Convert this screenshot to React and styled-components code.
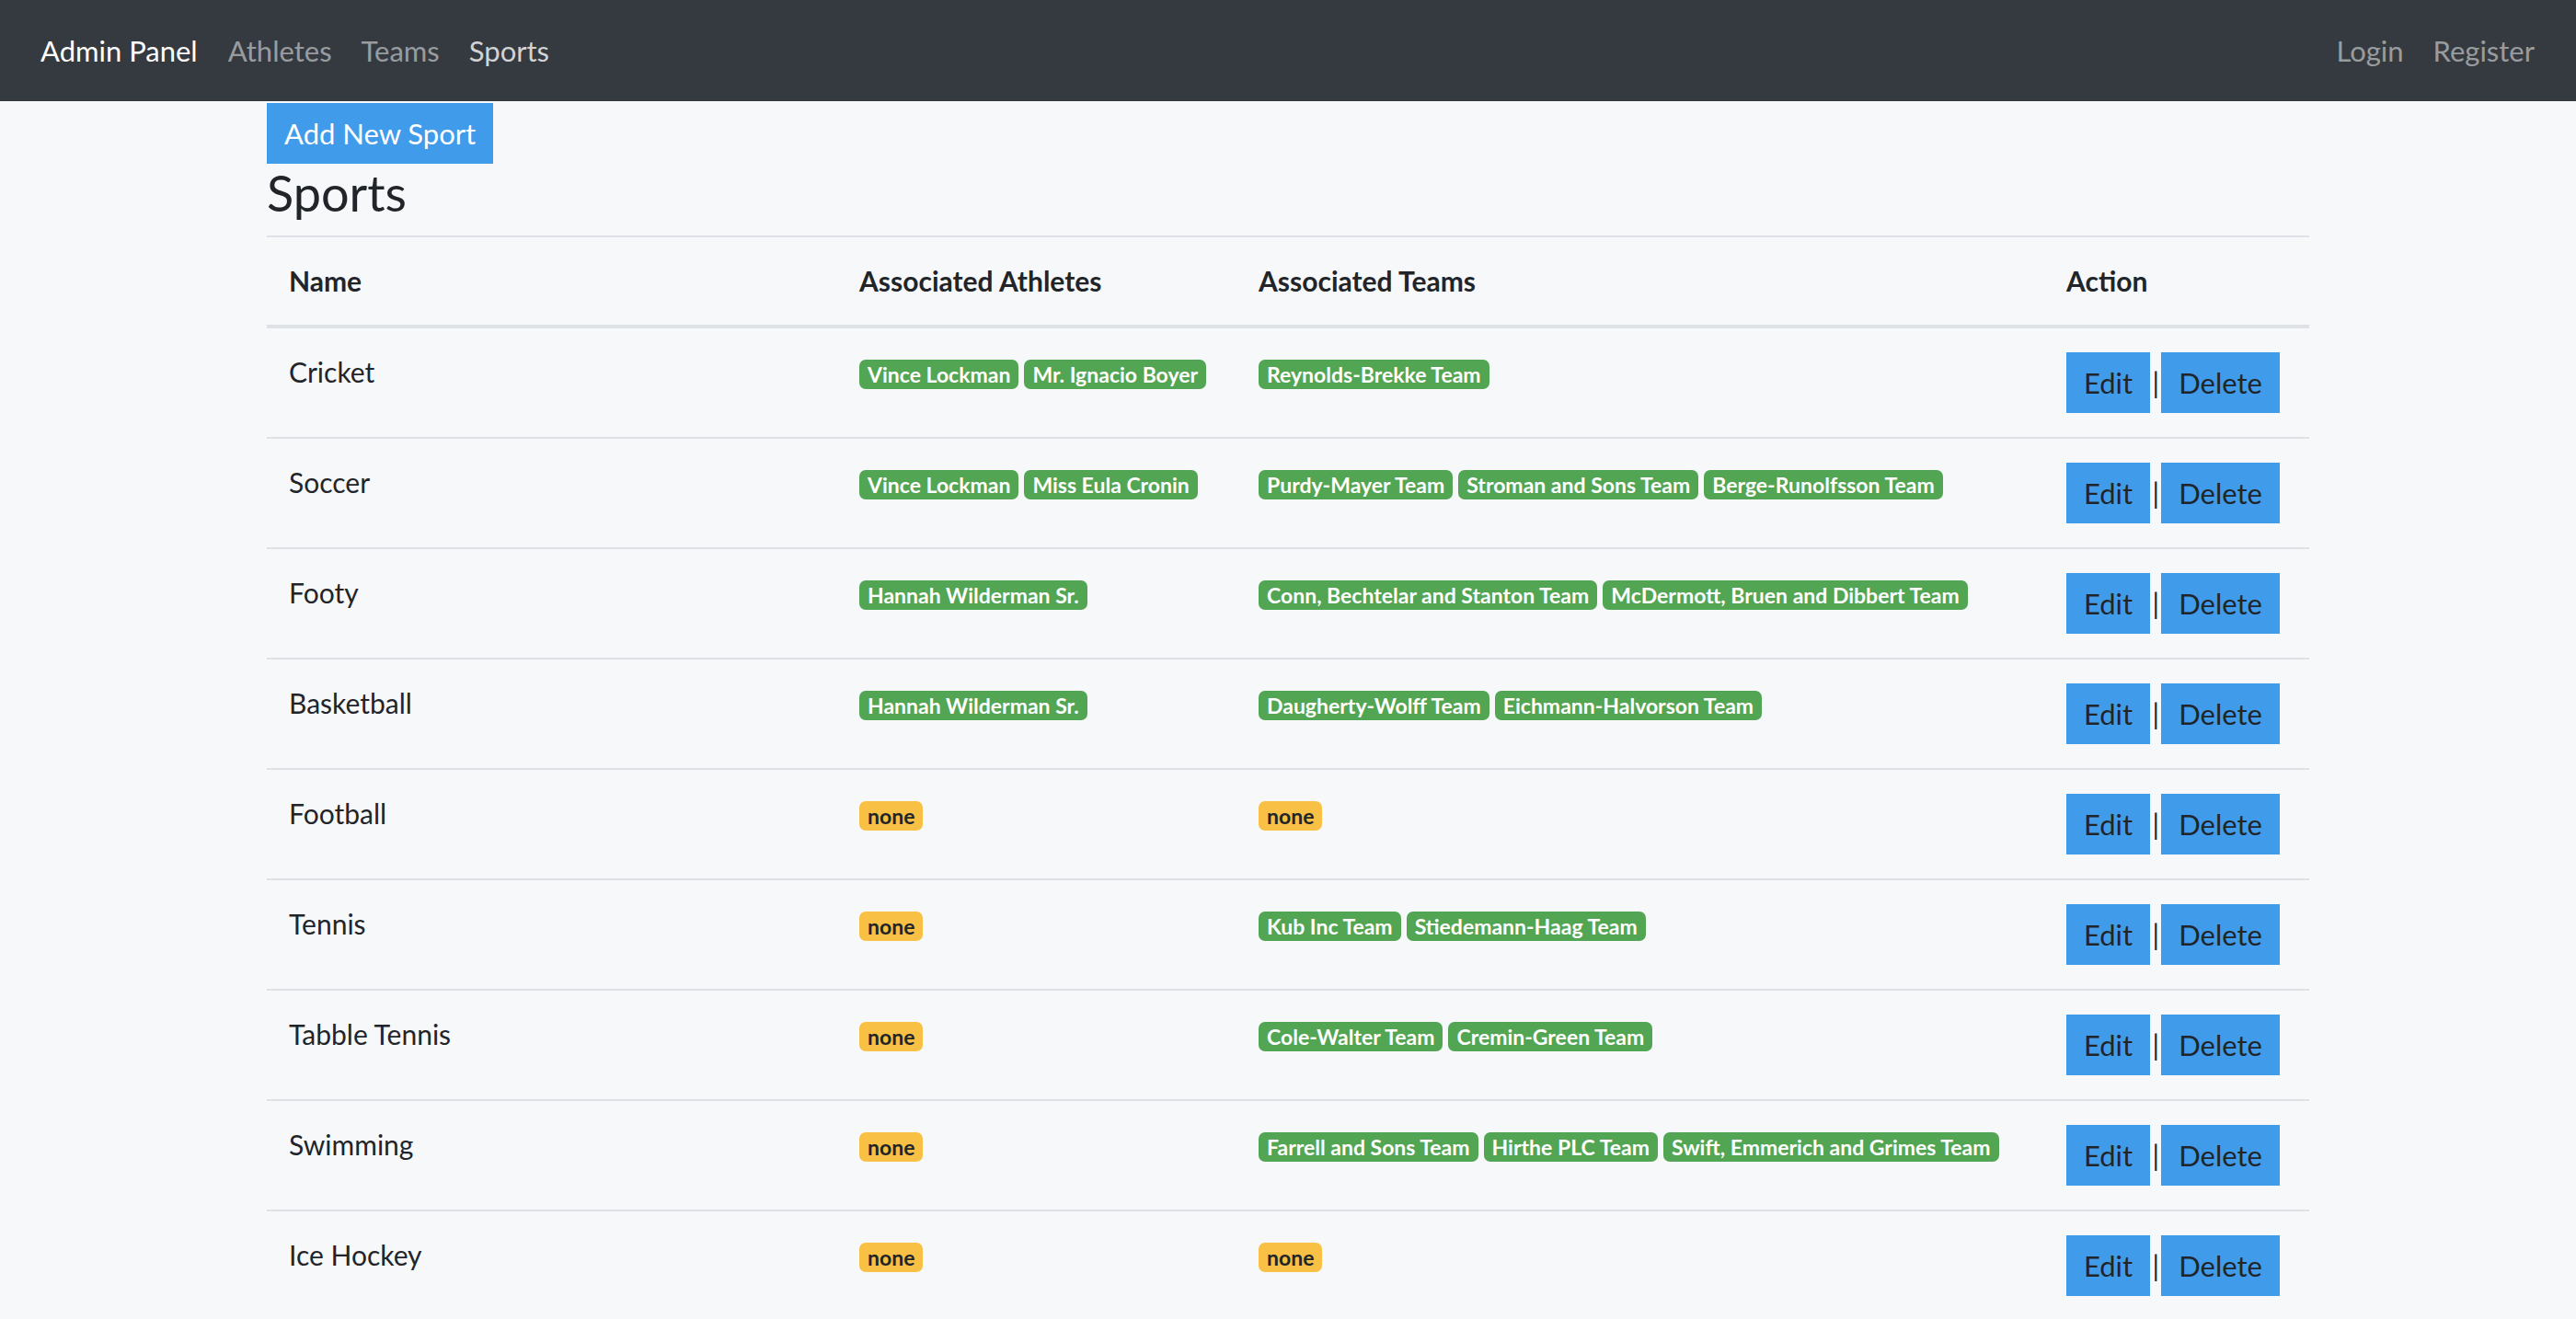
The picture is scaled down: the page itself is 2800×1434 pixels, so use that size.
import styled, { createGlobalStyle } from "styled-components";

const GlobalStyle = createGlobalStyle`
  body {
    margin: 0;
    background: #f7f8fa;
    color: #212529;
    font-family: Lato, "Open Sans", sans-serif;
    font-size: 30px;
    line-height: 48px;
  }
`;

const Navbar = styled.nav`
  height: 110px;
  background: #343a40;
  display: flex;
  align-items: center;
  justify-content: space-between;
  padding: 0 29px 0 44px;
  box-sizing: border-box;
`;

const NavGroup = styled.div`
  display: flex;
  align-items: center;
`;

const Brand = styled.a`
  color: #fff;
  font-size: 31px;
  margin-right: 17px;
`;

const NavLink = styled.a`
  color: ${(p) => (p.$active ? "rgba(255,255,255,0.78)" : "rgba(255,255,255,0.5)")};
  font-size: 31px;
  padding: 0 16px;
`;

const Container = styled.main`
  width: 2220px;
  margin: 0 auto;
`;

const AddButton = styled.button`
  margin-top: 2px;
  height: 66px;
  padding: 0 19px;
  border: 0;
  background: #409cea;
  color: #fff;
  font-family: inherit;
  font-size: 31px;
`;

const Title = styled.h3`
  margin: 0 0 14px;
  font-size: 54px;
  font-weight: 400;
  line-height: 64px;
`;

const Table = styled.table`
  width: 100%;
  border-collapse: collapse;
  table-layout: fixed;
`;

const Th = styled.th`
  box-sizing: border-box;
  text-align: left;
  font-weight: 700;
  padding: 23px 24px 24px;
  border-top: 2px solid #dee2e6;
  border-bottom: 4px solid #dee2e6;
  width: ${(p) => p.$w}px;
`;

const Td = styled.td`
  padding: 26px 24px;
  border-top: 2px solid #dee2e6;
  vertical-align: top;
`;

const Name = styled.div`
  margin-top: -3px;
`;

const Badges = styled.div`
  display: flex;
  flex-wrap: wrap;
  gap: 6px;
  margin-top: 8px;
`;

const Badge = styled.span`
  display: inline-block;
  font-size: 23px;
  font-weight: 700;
  line-height: 22px;
  padding: 5px 9px;
  border-radius: 7px;
  white-space: nowrap;
  background: ${(p) => (p.$none ? "#f8c146" : "#52a552")};
  color: ${(p) => (p.$none ? "#212529" : "#fff")};
`;

const Actions = styled.div`
  display: flex;
  align-items: center;
  height: 66px;
`;

const ActionButton = styled.button`
  height: 66px;
  padding: 0 19px;
  border: 0;
  background: #409cea;
  color: #212529;
  font-family: inherit;
  font-size: 31px;
`;

const Sep = styled.span`
  width: 12px;
  text-align: center;
  font-size: 30px;
`;

const sports = [
  ["Cricket", ["Vince Lockman", "Mr. Ignacio Boyer"], ["Reynolds-Brekke Team"]],
  ["Soccer", ["Vince Lockman", "Miss Eula Cronin"], ["Purdy-Mayer Team", "Stroman and Sons Team", "Berge-Runolfsson Team"]],
  ["Footy", ["Hannah Wilderman Sr."], ["Conn, Bechtelar and Stanton Team", "McDermott, Bruen and Dibbert Team"]],
  ["Basketball", ["Hannah Wilderman Sr."], ["Daugherty-Wolff Team", "Eichmann-Halvorson Team"]],
  ["Football", [], []],
  ["Tennis", [], ["Kub Inc Team", "Stiedemann-Haag Team"]],
  ["Tabble Tennis", [], ["Cole-Walter Team", "Cremin-Green Team"]],
  ["Swimming", [], ["Farrell and Sons Team", "Hirthe PLC Team", "Swift, Emmerich and Grimes Team"]],
  ["Ice Hockey", [], []],
];

const BadgeList = ({ items }) => (
  <Badges>
    {items.length === 0 ? (
      <Badge $none>none</Badge>
    ) : (
      items.map((name) => <Badge key={name}>{name}</Badge>)
    )}
  </Badges>
);

export default function App() {
  return (
    <>
      <GlobalStyle />
      <Navbar>
        <NavGroup>
          <Brand>Admin Panel</Brand>
          <NavLink>Athletes</NavLink>
          <NavLink>Teams</NavLink>
          <NavLink $active>Sports</NavLink>
        </NavGroup>
        <NavGroup>
          <NavLink>Login</NavLink>
          <NavLink>Register</NavLink>
        </NavGroup>
      </Navbar>
      <Container>
        <AddButton>Add New Sport</AddButton>
        <Title>Sports</Title>
        <Table>
          <thead>
            <tr>
              <Th $w={620}>Name</Th>
              <Th $w={434}>Associated Athletes</Th>
              <Th $w={878}>Associated Teams</Th>
              <Th $w={288}>Action</Th>
            </tr>
          </thead>
          <tbody>
            {sports.map(([name, athletes, teams]) => (
              <tr key={name}>
                <Td>
                  <Name>{name}</Name>
                </Td>
                <Td>
                  <BadgeList items={athletes} />
                </Td>
                <Td>
                  <BadgeList items={teams} />
                </Td>
                <Td>
                  <Actions>
                    <ActionButton>Edit</ActionButton>
                    <Sep>|</Sep>
                    <ActionButton>Delete</ActionButton>
                  </Actions>
                </Td>
              </tr>
            ))}
          </tbody>
        </Table>
      </Container>
    </>
  );
}
